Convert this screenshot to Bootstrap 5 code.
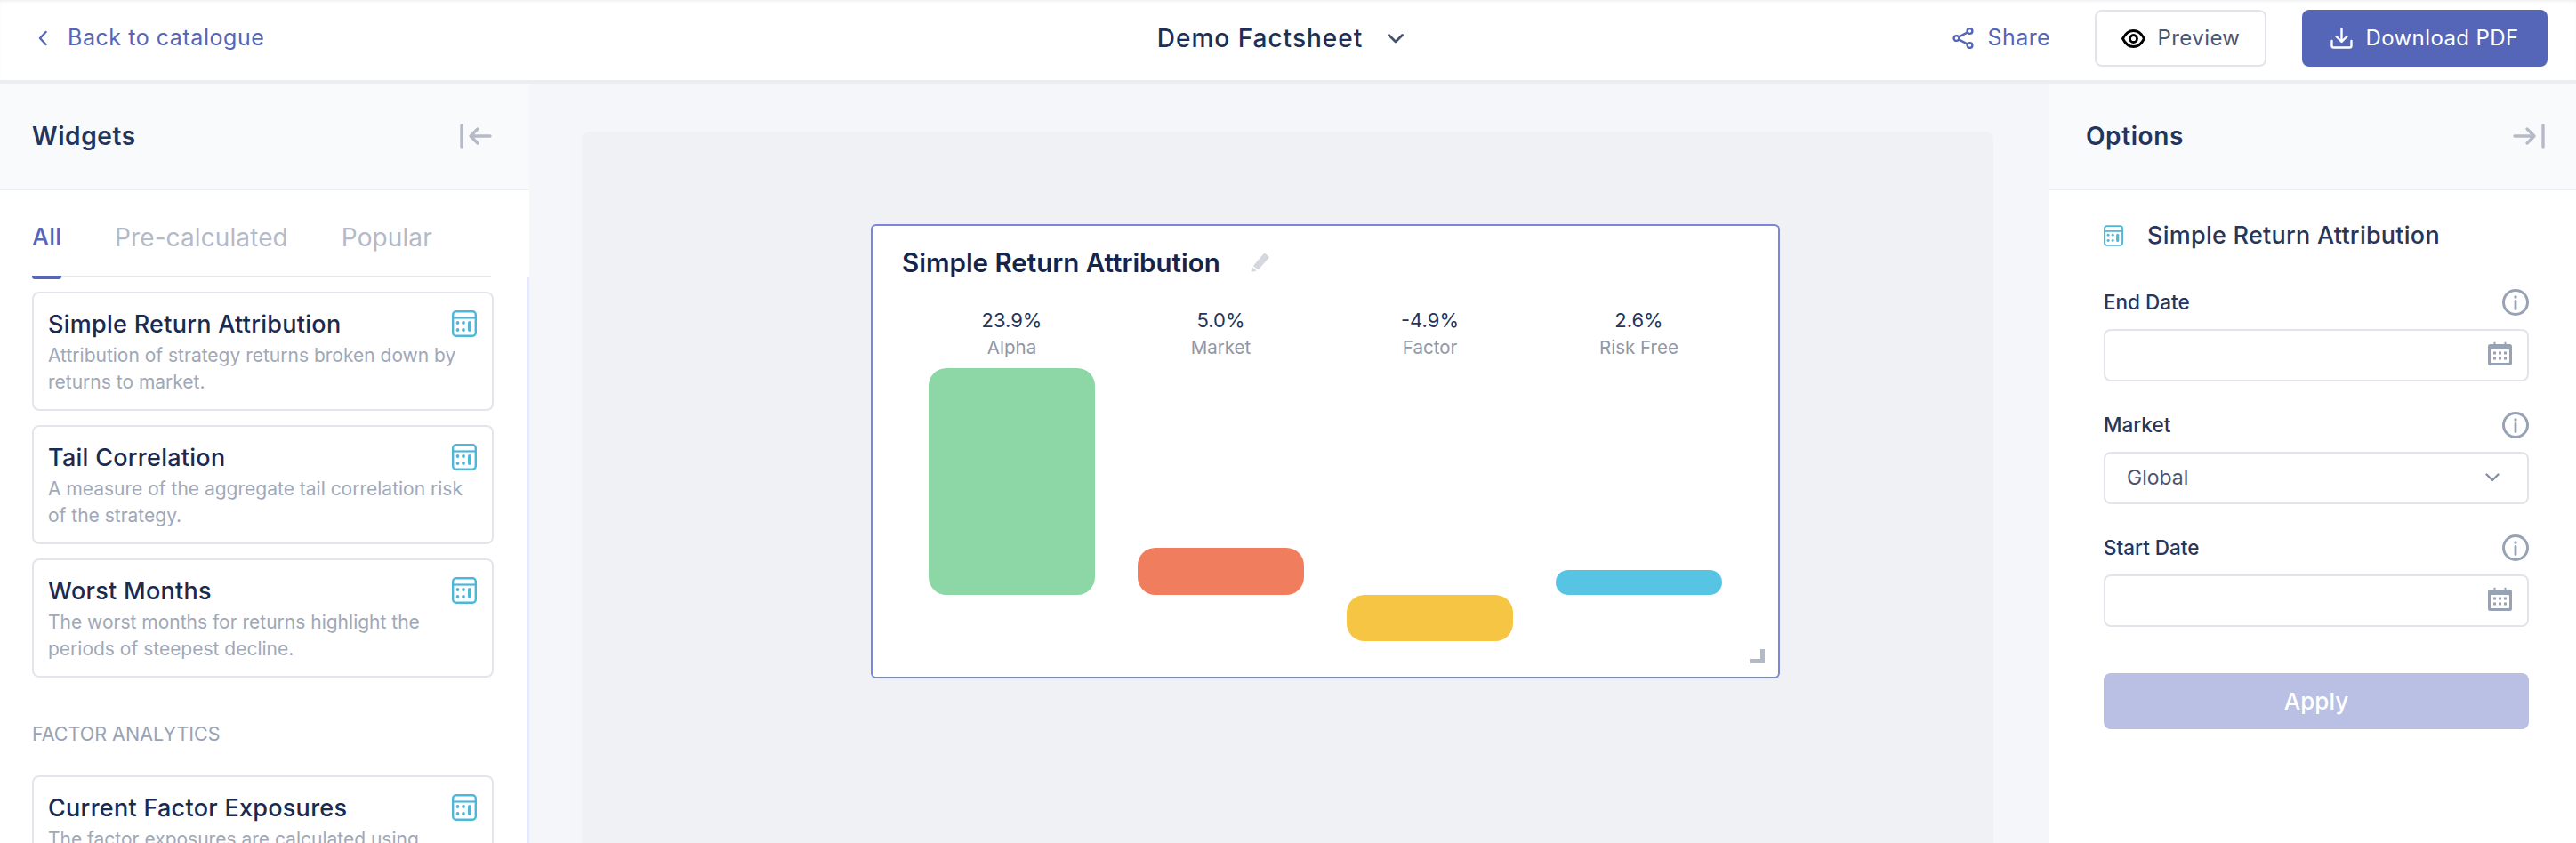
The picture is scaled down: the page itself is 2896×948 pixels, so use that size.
<!DOCTYPE html>
<html lang="en">
<head>
    <meta charset="UTF-8">
    <meta name="viewport" content="width=device-width, initial-scale=1.0">
    <title>Demo Factsheet</title>

    <link href="https://cdn.jsdelivr.net/npm/bootstrap@5.3.0/dist/css/bootstrap.min.css" rel="stylesheet">

    <style>
        body {
            font-family: Inter, "Noto Sans", sans-serif;
            color: #1e2f55;
            background: #f5f6fa;
            height: 100vh;
            overflow: hidden;
        }

        /* top bar */
        .top-bar {
            height: 94px;
            padding: 0 32px 4px 43px;
            background: #fff;
            border-bottom: 4px solid #ecedf3;
            box-shadow: inset 0 3px 3px -1px #f0f1f4;
            flex-shrink: 0;
        }

        .top-side { flex: 1 1 0; }

        .back-link {
            color: #5565b8;
            font-size: 25px;
            letter-spacing: .55px;
            text-decoration: none;
            gap: 23px;
        }

        .doc-title {
            font-size: 28px;
            font-weight: 500;
            letter-spacing: 1px;
            gap: 28px;
            margin-right: 28px;
        }

        .share-link {
            color: #5565b8;
            font-size: 25px;
            letter-spacing: .4px;
            text-decoration: none;
            gap: 16px;
            margin-right: 50px;
        }

        .btn-preview, .btn-download {
            height: 64px;
            font-size: 24px;
            letter-spacing: .4px;
            border-radius: 8px;
            gap: 14px;
        }

        .btn-preview {
            width: 193px;
            color: #4a5672;
            background: #fff;
            border: 2px solid #e2e4ea;
            margin-right: 40px;
        }

        .btn-download {
            width: 276px;
            color: #fff;
            background: #5565b8;
            border: 0;
        }

        /* side panels */
        .side-left, .side-right {
            background: #fff;
            flex-shrink: 0;
        }

        .side-left { width: 595px; }
        .side-right { width: 592px; }

        .panel-head {
            height: 120px;
            flex-shrink: 0;
            background: #f9fafc;
            border-bottom: 2px solid #eceef3;
            font-size: 28px;
            font-weight: 600;
            letter-spacing: .6px;
            color: #25345a;
        }

        .side-left .panel-head { padding: 0 42px 0 36px; }
        .side-right .panel-head { padding: 0 35px 0 41px; }

        .tab-strip {
            margin: 0 43px 0 36px;
            height: 98px;
            flex-shrink: 0;
            gap: 60px;
            border-bottom: 2px solid #e5e7eb;
            align-items: flex-end;
            flex-wrap: nowrap;
        }

        .tab-strip .nav-link {
            padding: 0 0 23px;
            margin-bottom: -4px;
            border-bottom: 4px solid transparent;
            color: #b4bac8;
            font-size: 28px;
            letter-spacing: .1px;
            line-height: 40px;
            white-space: nowrap;
        }

        .tab-strip .nav-link.active {
            color: #5565b8;
            font-weight: 500;
            border-bottom-color: #5565b8;
            border-radius: 3px;
            font-size: 27px;
        }

        .widget-scroll {
            padding: 16px 37px 0 36px;
            border-right: 3px solid #e6e9fb;
            overflow: hidden;
            min-height: 0;
        }

        .widget-item {
            height: 134px;
            border: 2px solid #e4e5ec;
            border-radius: 8px;
            padding: 15px 17px 0 16px;
            margin-bottom: 16px;
        }

        .widget-name {
            font-size: 27px;
            font-weight: 500;
            line-height: 40px;
            color: #1a2a50;
            letter-spacing: .01em;
        }

        .widget-desc {
            font-size: 21px;
            line-height: 30px;
            color: #a0a8b8;
            margin: 0;
        }

        .group-title {
            font-size: 21.500px;
            line-height: 30px;
            color: #99a3b5;
            margin: 48px 0 32px;
        }

        /* centre */
        .canvas-wrap {
            padding: 54px 63px 0 59px;
            min-width: 0;
        }

        .canvas-area {
            background: #f0f1f5;
            border-radius: 8px 8px 0 0;
            padding: 104px 0 0 325px;
        }

        .chart-card {
            width: 1022px;
            height: 511px;
            background: #fff;
            border: 2px solid #7a86d9;
            border-radius: 6px;
            padding: 21px 39px 0;
        }

        .chart-title {
            font-size: 29.500px;
            font-weight: 600;
            line-height: 40px;
            color: #152449;
            margin-left: -6px;
            gap: 33px;
        }

        .chart-cols {
            margin-top: 29px;
            grid-template-columns: repeat(4, 235px);
        }

        .bar-value {
            font-size: 22px;
            line-height: 32px;
            color: #25345a;
        }

        .bar-label {
            font-size: 20.500px;
            line-height: 30px;
            color: #8f97a8;
            margin-bottom: 8px;
        }

        .bar-fill {
            width: 187px;
            margin-left: auto;
            margin-right: auto;
            border-radius: 20px;
        }

        .resize-mark {
            position: absolute;
            right: 15px;
            bottom: 15px;
            width: 17px;
            height: 16px;
            border-right: 5px solid #b4b9c6;
            border-bottom: 5px solid #b4b9c6;
        }

        /* options form */
        .options-body { padding: 31px 53px 0 61px; }

        .options-title {
            font-size: 27px;
            font-weight: 500;
            line-height: 40px;
            letter-spacing: .25px;
            color: #27365a;
            gap: 27px;
            margin-bottom: 35px;
        }

        .field-label {
            font-size: 22.500px;
            font-weight: 500;
            line-height: 40px;
            color: #27365a;
            margin-bottom: 10px;
        }

        .field-input, .field-input:focus {
            height: 59px;
            border: 2px solid #e2e4ea;
            border-radius: 8px;
            font-size: 23px;
            color: #4a5672;
            padding-left: 24px;
            box-shadow: none;
        }

        .field-select, .field-select:focus { background-image: none; }

        .field-icon {
            position: absolute;
            right: 19px;
            top: 14px;
            pointer-events: none;
        }

        .select-arrow {
            position: absolute;
            right: 33px;
            top: 24px;
            pointer-events: none;
        }

        .field-wrap { margin-bottom: 29px; }

        .btn-apply, .btn-apply:disabled {
            height: 63px;
            margin-top: 23px;
            font-size: 26px;
            font-weight: 500;
            color: #fff;
            background: #bac0e3;
            border: 0;
            border-radius: 8px;
            opacity: 1;
        }
    </style>
</head>
<body class="d-flex flex-column">

<svg width="0" height="0" class="position-absolute">
    <symbol id="calc" viewBox="0 0 28 30">
        <rect x="1.200" y="1.200" width="25.600" height="27.600" rx="3.500" fill="none" stroke="currentColor" stroke-width="2.400"/>
        <path d="M1.200 8.500h25.600" stroke="currentColor" stroke-width="2.200"/>
        <g fill="currentColor">
            <circle cx="6.500" cy="14" r="1.900"/><circle cx="13" cy="14" r="1.900"/>
            <circle cx="6.500" cy="22" r="1.900"/><circle cx="13" cy="22" r="1.900"/>
            <rect x="18" y="12" width="4" height="12" rx="2"/>
        </g>
    </symbol>
    <symbol id="info" viewBox="0 0 30 30">
        <circle cx="15" cy="15" r="13.500" fill="none" stroke="#98a2b5" stroke-width="3"/>
        <circle cx="15" cy="9" r="1.700" fill="#98a2b5"/>
        <path d="M15 13.500v9" stroke="#98a2b5" stroke-width="2.800" stroke-linecap="round"/>
    </symbol>
    <symbol id="cal" viewBox="0 0 27 27">
        <path d="M2.500 3h4V.8h2V3h10V.8h2V3h4A2.500 2.500 0 0 1 27 5.500v19a2.500 2.500 0 0 1-2.500 2.500h-22A2.500 2.500 0 0 1 0 24.500v-19A2.500 2.500 0 0 1 2.500 3Z" fill="#98a2b5"/>
        <rect x="3" y="9" width="21" height="15" rx="1" fill="#fff"/>
        <g fill="#98a2b5">
            <rect x="6" y="11.500" width="3" height="3"/><rect x="12" y="11.500" width="3" height="3"/><rect x="18" y="11.500" width="3" height="3"/>
            <rect x="6" y="17.500" width="3" height="3"/><rect x="12" y="17.500" width="3" height="3"/><rect x="18" y="17.500" width="3" height="3"/>
        </g>
    </symbol>
</svg>

<!-- top bar -->
<header class="top-bar d-flex align-items-center">
    <div class="top-side">
        <a href="#" class="back-link d-inline-flex align-items-center">
            <svg width="10" height="18" viewBox="0 0 10 18" fill="none" stroke="#5565b8" stroke-width="2.400" stroke-linecap="round" stroke-linejoin="round"><path d="M8.500 2 2 9l6.500 7"/></svg>
            Back to catalogue
        </a>
    </div>
    <div class="doc-title d-flex align-items-center">
        Demo Factsheet
        <svg width="18" height="11" viewBox="0 0 18 11" fill="none" stroke="#44526f" stroke-width="2.800" stroke-linecap="round" stroke-linejoin="round"><path d="m1.500 1.500 7.500 7.500 7.500-7.500"/></svg>
    </div>
    <div class="top-side d-flex justify-content-end align-items-center">
        <a href="#" class="share-link d-inline-flex align-items-center">
            <svg width="24" height="24" viewBox="0 0 24 24" fill="none" stroke="#5565b8" stroke-width="2.400"><circle cx="19.500" cy="4" r="2.900"/><circle cx="4.500" cy="12" r="2.900"/><circle cx="19.500" cy="20" r="2.900"/><path d="m7 10.600 10-5.200M7 13.400l10 5.200"/></svg>
            Share
        </a>
        <button type="button" class="btn btn-preview d-flex align-items-center justify-content-center">
            <svg width="27" height="21" viewBox="0 0 27 21" fill="none" stroke="#000" stroke-width="2.800"><path d="M1.500 10.500C4.500 4.500 8.500 1.500 13.500 1.500s9 3 12 9c-3 6-7 9-12 9s-9-3-12-9Z"/><circle cx="13.500" cy="10.500" r="4"/></svg>
            Preview
        </button>
        <button type="button" class="btn btn-download d-flex align-items-center justify-content-center">
            <svg width="25" height="24" viewBox="0 0 25 24" fill="none" stroke="#fff" stroke-width="2.400" stroke-linecap="round" stroke-linejoin="round"><path d="M12.500 1.500v14M6.500 10l6 6 6-6M1.500 15v5.500a2 2 0 0 0 2 2h18a2 2 0 0 0 2-2V15"/></svg>
            Download PDF
        </button>
    </div>
</header>

<div class="d-flex flex-grow-1" style="min-height:0">

    <!-- widgets panel -->
    <aside class="side-left d-flex flex-column">
        <div class="panel-head d-flex align-items-center justify-content-between">
            Widgets
            <svg width="36" height="28" viewBox="0 0 36 28" fill="none" stroke="#b4bac8" stroke-width="3.400" stroke-linecap="round" stroke-linejoin="round"><path d="M2 2v24M34 14H12M20 6l-8 8 8 8"/></svg>
        </div>
        <ul class="nav tab-strip">
            <li class="nav-item"><a class="nav-link active" href="#">All</a></li>
            <li class="nav-item"><a class="nav-link" href="#">Pre-calculated</a></li>
            <li class="nav-item"><a class="nav-link" href="#">Popular</a></li>
        </ul>
        <div class="widget-scroll flex-grow-1">
            <div class="widget-item">
                <div class="d-flex justify-content-between">
                    <span class="widget-name">Simple Return Attribution</span>
                    <svg class="mt-1" width="28" height="30" color="#4cb8d9"><use href="#calc"/></svg>
                </div>
                <p class="widget-desc">Attribution of strategy returns broken down by returns to market.</p>
            </div>
            <div class="widget-item">
                <div class="d-flex justify-content-between">
                    <span class="widget-name">Tail Correlation</span>
                    <svg class="mt-1" width="28" height="30" color="#4cb8d9"><use href="#calc"/></svg>
                </div>
                <p class="widget-desc">A measure of the aggregate tail correlation risk of the strategy.</p>
            </div>
            <div class="widget-item">
                <div class="d-flex justify-content-between">
                    <span class="widget-name">Worst Months</span>
                    <svg class="mt-1" width="28" height="30" color="#4cb8d9"><use href="#calc"/></svg>
                </div>
                <p class="widget-desc">The worst months for returns highlight the periods of steepest decline.</p>
            </div>
            <div class="group-title">FACTOR ANALYTICS</div>
            <div class="widget-item">
                <div class="d-flex justify-content-between">
                    <span class="widget-name">Current Factor Exposures</span>
                    <svg class="mt-1" width="28" height="30" color="#4cb8d9"><use href="#calc"/></svg>
                </div>
                <p class="widget-desc">The factor exposures are calculated using regression.</p>
            </div>
        </div>
    </aside>

    <!-- canvas -->
    <main class="canvas-wrap flex-grow-1 d-flex">
        <div class="canvas-area flex-grow-1">
            <div class="chart-card position-relative">
                <div class="chart-title d-flex align-items-center">
                    Simple Return Attribution
                    <svg width="22" height="22" viewBox="0 0 22 22" fill="#d4d7df"><path d="M15.500 1.500a1.500 1.500 0 0 1 2.100-.2l3.400 2.900a1.500 1.500 0 0 1 .2 2.100L9.500 19.500 3.800 15Z"/><path d="M2.800 16.500 7.800 20.600 1.500 22Z"/></svg>
                </div>
                <div class="chart-cols d-grid text-center" id="chartCols"></div>
                <span class="resize-mark"></span>
            </div>
        </div>
    </main>

    <!-- options panel -->
    <aside class="side-right">
        <div class="panel-head d-flex align-items-center justify-content-between">
            Options
            <svg width="36" height="28" viewBox="0 0 36 28" fill="none" stroke="#b4bac8" stroke-width="3.400" stroke-linecap="round" stroke-linejoin="round"><path d="M34 2v24M2 14h22M16 6l8 8-8 8"/></svg>
        </div>
        <div class="options-body">
            <div class="options-title d-flex align-items-center">
                <svg width="22" height="24" color="#4cb8d9"><use href="#calc"/></svg>
                Simple Return Attribution
            </div>

            <div class="field-wrap">
                <div class="field-label d-flex justify-content-between align-items-center">
                    End Date
                    <svg width="30" height="30"><use href="#info"/></svg>
                </div>
                <div class="position-relative">
                    <input type="text" class="form-control field-input">
                    <svg class="field-icon" width="27" height="27"><use href="#cal"/></svg>
                </div>
            </div>

            <div class="field-wrap">
                <div class="field-label d-flex justify-content-between align-items-center">
                    Market
                    <svg width="30" height="30"><use href="#info"/></svg>
                </div>
                <div class="position-relative">
                    <select class="form-select field-input field-select">
                        <option>Global</option>
                    </select>
                    <svg class="select-arrow" width="16" height="10" viewBox="0 0 16 10" fill="none" stroke="#8590a4" stroke-width="2.400" stroke-linecap="round" stroke-linejoin="round"><path d="m1.500 1.500 6.500 6.500 6.500-6.500"/></svg>
                </div>
            </div>

            <div class="field-wrap">
                <div class="field-label d-flex justify-content-between align-items-center">
                    Start Date
                    <svg width="30" height="30"><use href="#info"/></svg>
                </div>
                <div class="position-relative">
                    <input type="text" class="form-control field-input">
                    <svg class="field-icon" width="27" height="27"><use href="#cal"/></svg>
                </div>
            </div>

            <button type="button" class="btn btn-apply w-100" disabled>Apply</button>
        </div>
    </aside>
</div>

<script src="https://cdn.jsdelivr.net/npm/bootstrap@5.3.0/dist/js/bootstrap.bundle.min.js"></script>

<script>
    // bars share a zero line, 10.67px for each percentage point
    const bars = [
        { value: 23.9, label: 'Alpha', color: '#8dd6a6' },
        { value: 5.0, label: 'Market', color: '#f07e5e' },
        { value: -4.9, label: 'Factor', color: '#f6c544' },
        { value: 2.6, label: 'Risk Free', color: '#58c4e3' }
    ];
    const zeroLine = 255;
    const perPoint = 10.67;

    document.getElementById('chartCols').innerHTML = bars.map((bar) => {
        const h = Math.abs(bar.value) * perPoint;
        const top = bar.value > 0 ? zeroLine - h : zeroLine;
        return `
            <div class="d-flex flex-column">
                <div class="bar-value">${bar.value.toFixed(1)}%</div>
                <div class="bar-label">${bar.label}</div>
                <div class="bar-fill" style="height:${h}px;margin-top:${top}px;background:${bar.color}"></div>
            </div>`;
    }).join('');
</script>

</body>
</html>
